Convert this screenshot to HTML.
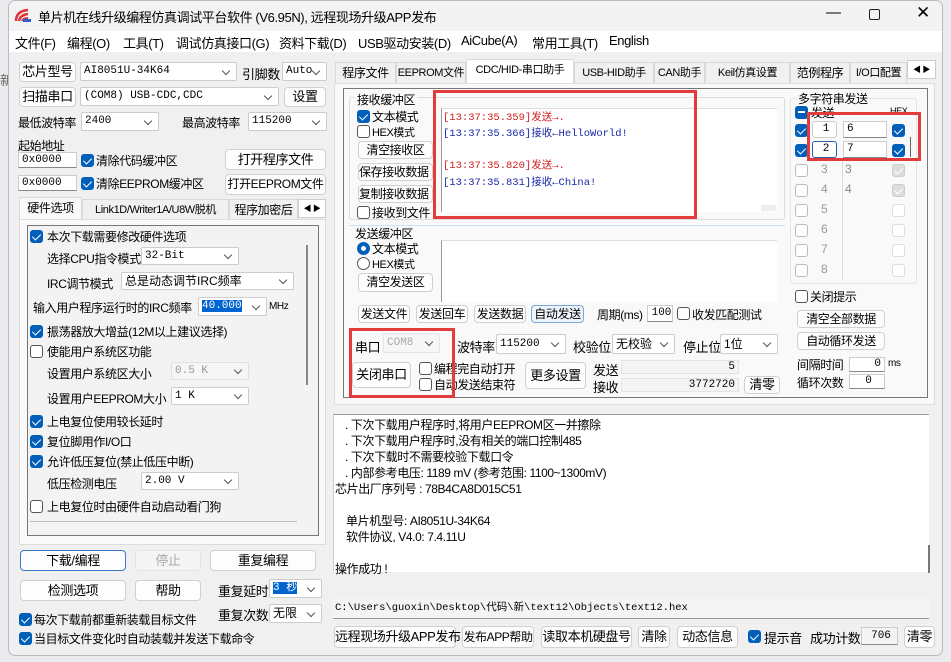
<!DOCTYPE html>
<html><head><meta charset="utf-8"><style>
*{box-sizing:border-box;margin:0;padding:0}
body{width:951px;height:662px;overflow:hidden;background:#e9ebee;font-family:"Liberation Sans","Noto Sans CJK SC",sans-serif;font-size:12px;color:#000;position:relative;letter-spacing:-0.4px}
.a{position:absolute;white-space:nowrap}
.btn{position:absolute;background:#fdfdfd;border:1px solid #d0d0d0;border-radius:4px;text-align:center;white-space:nowrap;font-size:12px}
.cb{position:absolute;width:13px;height:13px;border:1px solid #555;border-radius:3px;background:#fff}
.cb.on{background:#005fb8;border-color:#005fb8}
.cb.on:after{content:"";position:absolute;left:3px;top:1px;width:4px;height:7px;border:solid #fff;border-width:0 1.5px 1.5px 0;transform:rotate(45deg)}
.cb.dis{background:#ddd;border-color:#ccc}
.cb.dis:after{content:"";position:absolute;left:3px;top:1px;width:4px;height:7px;border:solid #fff;border-width:0 1.5px 1.5px 0;transform:rotate(45deg)}
.cb.lt{border-color:#bbb}
.cmb{position:absolute;background:#fff;border:1px solid #ccc;border-radius:2px;white-space:nowrap;padding-left:3px;font-size:11px;font-family:"Liberation Mono","Noto Sans CJK SC",monospace;letter-spacing:0}
.cmb:after{content:"";position:absolute;right:7px;top:50%;margin-top:-4px;width:5px;height:5px;border:solid #555;border-width:0 1px 1px 0;transform:rotate(45deg)}
.inp{position:absolute;background:#fff;border:1px solid #ccc;border-bottom-color:#888;white-space:nowrap;font-size:11px;font-family:"Liberation Mono",monospace;padding-left:3px;letter-spacing:0}
.mono{font-family:"Liberation Mono","Noto Sans CJK SC",monospace;letter-spacing:0}
.tab{position:absolute;height:21px;border:1px solid #d8d8d8;border-bottom:none;background:#f0f0f0;text-align:center;white-space:nowrap;line-height:20px;font-size:12px}
.red{position:absolute;border:3px solid #e23b3b}
.grp{position:absolute;border:1px solid #dcdcdc;border-radius:3px}
</style></head><body>
<div class="a" style="left:0;top:70px;color:#666;font-size:13px">新</div>
<div style="position:absolute;left:8px;top:0;width:935px;height:656px;background:#f0f0f0;border:1px solid #bbb;border-radius:7px;overflow:hidden">
<div style="position:absolute;left:0;top:0;width:100%;height:30px;background:#f3f3f3"></div>
<div style="position:absolute;left:0;top:30px;width:100%;height:21px;background:#fff"></div>
</div>
<svg class="a" style="left:14px;top:7px" width="18" height="16"><path d="M2 14 Q2 4 14 3" stroke="#d9363e" stroke-width="2.5" fill="none"/><path d="M5 14 Q6 8 14 7" stroke="#d9363e" stroke-width="2.5" fill="none"/><path d="M8 14 Q9 11 14 11" stroke="#d9363e" stroke-width="2" fill="none"/><rect x="9" y="12" width="8" height="3" fill="#2b5fcf"/></svg>
<div class="a" style="left:38px;top:7px;font-size:13px">单片机在线升级编程仿真调试平台软件 (V6.95N), 远程现场升级APP发布</div>
<div class="a" style="left:826px;top:4px;font-size:15px">—</div>
<div class="a" style="left:869px;top:9px;width:11px;height:11px;border:1px solid #222;border-radius:2px"></div>
<div class="a" style="left:916px;top:3px;font-size:17px">✕</div>
<div class="a" style="left:15px;top:33px;font-size:13px">文件(F)</div>
<div class="a" style="left:67px;top:33px;font-size:13px">编程(O)</div>
<div class="a" style="left:123px;top:33px;font-size:13px">工具(T)</div>
<div class="a" style="left:176px;top:33px;font-size:13px">调试仿真接口(G)</div>
<div class="a" style="left:279px;top:33px;font-size:13px">资料下载(D)</div>
<div class="a" style="left:358px;top:33px;font-size:13px">USB驱动安装(D)</div>
<div class="a" style="left:461px;top:33px;font-size:13px">AiCube(A)</div>
<div class="a" style="left:532px;top:33px;font-size:13px">常用工具(T)</div>
<div class="a" style="left:609px;top:33px;font-size:13px">English</div>
<div class="btn" style="left:19px;top:62px;width:57px;height:20px;line-height:18px;font-size:13px">芯片型号</div>
<div class="cmb" style="left:80px;top:62px;width:157px;height:19px;line-height:17px">AI8051U-34K64</div>
<div class="a" style="left:242px;top:64px;font-size:13px">引脚数</div>
<div class="cmb" style="left:282px;top:62px;width:45px;height:19px;line-height:17px">Auto</div>
<div class="btn" style="left:19px;top:87px;width:57px;height:20px;line-height:18px;font-size:13px">扫描串口</div>
<div class="cmb" style="left:80px;top:87px;width:199px;height:19px;line-height:17px">(COM8) USB-CDC,CDC</div>
<div class="btn" style="left:284px;top:87px;width:42px;height:20px;line-height:18px;font-size:13px">设置</div>
<div class="a" style="left:18px;top:114px">最低波特率</div>
<div class="cmb" style="left:81px;top:112px;width:78px;height:19px;line-height:17px">2400</div>
<div class="a" style="left:182px;top:114px">最高波特率</div>
<div class="cmb" style="left:248px;top:112px;width:79px;height:19px;line-height:17px">115200</div>
<div class="a" style="left:18px;top:137px">起始地址</div>
<div class="inp" style="left:18px;top:152px;width:59px;height:16px;line-height:14px">0x0000</div>
<div class="cb on" style="left:81px;top:154px"></div><div class="a" style="left:96px;top:152px">清除代码缓冲区</div>
<div class="btn" style="left:225px;top:149px;width:101px;height:21px;line-height:19px;font-size:13px">打开程序文件</div>
<div class="inp" style="left:18px;top:175px;width:59px;height:16px;line-height:14px">0x0000</div>
<div class="cb on" style="left:81px;top:177px"></div><div class="a" style="left:96px;top:175px">清除EEPROM缓冲区</div>
<div class="btn" style="left:225px;top:174px;width:101px;height:21px;line-height:19px;font-size:12px">打开EEPROM文件</div>
<div class="tab" style="left:19px;top:197px;width:63px;height:23px;background:#f9f9f9">硬件选项</div>
<div class="tab" style="left:82px;top:199px;width:147px;font-size:11px">Link1D/Writer1A/U8W脱机</div>
<div class="tab" style="left:229px;top:199px;width:69px;overflow:hidden">程序加密后</div>
<div class="a" style="left:298px;top:199px;width:28px;height:19px;border:1px solid #ccc;background:#fff;font-size:8px;line-height:17px;text-align:center">◀ ▶</div>
<div class="a" style="left:19px;top:219px;width:307px;height:326px;border:1px solid #dcdcdc;background:#f9f9f9"></div>
<div class="a" style="left:27px;top:225px;width:292px;height:311px;border:1px solid #777;background:#f3f3f3"></div>
<div class="a" style="left:306px;top:245px;width:2px;height:140px;background:#888"></div>
<div class="a" style="left:30px;top:521px;width:267px;height:1px;background:#bbb"></div>
<div class="cb on" style="left:30px;top:230px"></div><div class="a" style="left:47px;top:228px">本次下载需要修改硬件选项</div>
<div class="a" style="left:47px;top:250px">选择CPU指令模式</div><div class="cmb" style="left:141px;top:247px;width:98px;height:18px;line-height:16px">32-Bit</div>
<div class="a" style="left:47px;top:275px">IRC调节模式</div><div class="cmb" style="left:121px;top:272px;width:173px;height:18px;line-height:16px;font-family:'Liberation Sans','Noto Sans CJK SC',sans-serif;font-size:12px">总是动态调节IRC频率</div>
<div class="a" style="left:33px;top:299px">输入用户程序运行时的IRC频率</div><div class="cmb" style="left:198px;top:297px;width:69px;height:19px;line-height:17px"><span style="background:#0064d0;color:#fff">40.000</span></div><div class="a" style="left:269px;top:301px;font-size:10px">MHz</div>
<div class="cb on" style="left:30px;top:325px"></div><div class="a" style="left:47px;top:323px">振荡器放大增益(12M以上建议选择)</div>
<div class="cb" style="left:30px;top:345px"></div><div class="a" style="left:47px;top:343px">使能用户系统区功能</div>
<div class="a" style="left:47px;top:365px">设置用户系统区大小</div><div class="cmb" style="left:171px;top:362px;width:78px;height:18px;line-height:16px;color:#999;border-color:#e0e0e0;background:#f6f6f6">0.5 K</div>
<div class="a" style="left:47px;top:390px">设置用户EEPROM大小</div><div class="cmb" style="left:171px;top:387px;width:78px;height:18px;line-height:16px">1   K</div>
<div class="cb on" style="left:30px;top:415px"></div><div class="a" style="left:47px;top:413px">上电复位使用较长延时</div>
<div class="cb on" style="left:30px;top:435px"></div><div class="a" style="left:47px;top:433px">复位脚用作I/O口</div>
<div class="cb on" style="left:30px;top:455px"></div><div class="a" style="left:47px;top:453px">允许低压复位(禁止低压中断)</div>
<div class="a" style="left:47px;top:475px">低压检测电压</div><div class="cmb" style="left:141px;top:472px;width:98px;height:18px;line-height:16px">2.00 V</div>
<div class="cb" style="left:30px;top:500px"></div><div class="a" style="left:47px;top:498px">上电复位时由硬件自动启动看门狗</div>
<div class="btn" style="left:20px;top:550px;width:106px;height:21px;line-height:19px;border-color:#3a78c8;font-size:13px">下载/编程</div>
<div class="btn" style="left:135px;top:550px;width:66px;height:21px;line-height:19px;color:#aaa;border-color:#e4e4e4;background:#f5f5f5;font-size:13px">停止</div>
<div class="btn" style="left:210px;top:550px;width:106px;height:21px;line-height:19px;font-size:13px">重复编程</div>
<div class="btn" style="left:20px;top:580px;width:106px;height:21px;line-height:19px;font-size:13px">检测选项</div>
<div class="btn" style="left:135px;top:580px;width:66px;height:21px;line-height:19px;font-size:13px">帮助</div>
<div class="a" style="left:218px;top:581px;font-size:13px">重复延时</div><div class="cmb" style="left:269px;top:579px;width:53px;height:19px;line-height:17px"><span style="background:#0064d0;color:#fff">3 秒</span></div>
<div class="a" style="left:218px;top:605px;font-size:13px">重复次数</div><div class="cmb" style="left:269px;top:604px;width:53px;height:19px;line-height:17px;font-family:'Liberation Sans','Noto Sans CJK SC',sans-serif;font-size:12px">无限</div>
<div class="cb on" style="left:19px;top:613px"></div><div class="a" style="left:34px;top:611px">每次下载前都重新装载目标文件</div>
<div class="cb on" style="left:19px;top:632px"></div><div class="a" style="left:34px;top:630px">当目标文件变化时自动装载并发送下载命令</div>
<div class="tab" style="left:335px;top:62px;width:61px">程序文件</div>
<div class="tab" style="left:396px;top:62px;width:70px;font-size:11px">EEPROM文件</div>
<div class="tab" style="left:466px;top:59px;width:108px;height:25px;background:#fff;font-size:11px">CDC/HID-串口助手</div>
<div class="tab" style="left:574px;top:62px;width:80px;font-size:11px">USB-HID助手</div>
<div class="tab" style="left:654px;top:62px;width:51px;font-size:11px">CAN助手</div>
<div class="tab" style="left:705px;top:62px;width:85px;font-size:11px">Keil仿真设置</div>
<div class="tab" style="left:790px;top:62px;width:60px">范例程序</div>
<div class="tab" style="left:850px;top:62px;width:57px;overflow:hidden;font-size:11px">I/O口配置</div>
<div class="a" style="left:907px;top:60px;width:29px;height:19px;border:1px solid #ccc;background:#fff;font-size:8px;line-height:17px;text-align:center">◀ ▶</div>
<div class="a" style="left:334px;top:83px;width:601px;height:322px;background:#f9f9f9;border:1px solid #ddd"></div>
<div class="a" style="left:343px;top:88px;width:585px;height:310px;border:1px solid #777"></div>
<div class="grp" style="left:349px;top:97px;width:436px;height:123px"></div>
<div class="a" style="left:355px;top:91px;background:#f9f9f9;padding:0 2px">接收缓冲区</div>
<div class="cb on" style="left:357px;top:110px"></div><div class="a" style="left:372px;top:108px">文本模式</div>
<div class="cb" style="left:357px;top:125px"></div><div class="a" style="left:372px;top:124px;font-size:11px">HEX模式</div>
<div class="btn" style="left:358px;top:141px;width:75px;height:18px;line-height:16px">清空接收区</div>
<div class="btn" style="left:358px;top:163px;width:75px;height:18px;line-height:16px;text-align:left;overflow:hidden">保存接收数据</div>
<div class="btn" style="left:358px;top:185px;width:75px;height:18px;line-height:16px;text-align:left;overflow:hidden">复制接收数据</div>
<div class="cb" style="left:357px;top:206px"></div><div class="a" style="left:372px;top:204px">接收到文件</div>
<div class="a" style="left:441px;top:108px;width:336px;height:104px;background:#fff;border-left:1px solid #999;border-top:1px solid #ddd"></div>
<div class="a" style="left:761px;top:205px;width:15px;height:6px;background:#eee"></div>
<div class="a mono" style="left:443px;top:109px;font-size:10.5px;color:#d02020">[13:37:35.359]发送→.</div>
<div class="a mono" style="left:443px;top:125px;font-size:10.5px;color:#1a2aa8">[13:37:35.366]接收←HelloWorld!</div>
<div class="a mono" style="left:443px;top:157px;font-size:10.5px;color:#d02020">[13:37:35.820]发送→.</div>
<div class="a mono" style="left:443px;top:174px;font-size:10.5px;color:#1a2aa8">[13:37:35.831]接收←China!</div>
<div class="red" style="left:433px;top:90px;width:264px;height:129px"></div>
<div class="a" style="left:349px;top:225px;width:436px;height:1px;background:#cfe0ee"></div>
<div class="a" style="left:355px;top:225px">发送缓冲区</div>
<div class="a" style="left:357px;top:242px;width:13px;height:13px;border-radius:50%;border:4px solid #005fb8;background:#fff"></div><div class="a" style="left:372px;top:240px">文本模式</div>
<div class="a" style="left:357px;top:257px;width:13px;height:13px;border-radius:50%;border:1px solid #555;background:#fff"></div><div class="a" style="left:372px;top:256px;font-size:11px">HEX模式</div>
<div class="btn" style="left:358px;top:273px;width:75px;height:19px;line-height:17px">清空发送区</div>
<div class="a" style="left:441px;top:240px;width:336px;height:62px;background:#fff;border-left:1px solid #999;border-top:1px solid #ddd"></div>
<div class="btn" style="left:358px;top:305px;width:52px;height:18px;line-height:16px">发送文件</div>
<div class="btn" style="left:416px;top:305px;width:52px;height:18px;line-height:16px">发送回车</div>
<div class="btn" style="left:474px;top:305px;width:52px;height:18px;line-height:16px">发送数据</div>
<div class="btn" style="left:531px;top:305px;width:53px;height:18px;line-height:16px;border-color:#7aa6d8;background:#eef4fb">自动发送</div>
<div class="a" style="left:597px;top:306px">周期(ms)</div>
<div class="inp" style="left:647px;top:305px;width:26px;height:17px;line-height:15px;text-align:center">100</div>
<div class="cb" style="left:677px;top:307px"></div><div class="a" style="left:692px;top:306px">收发匹配测试</div>
<div class="a" style="left:355px;top:337px;font-size:13px">串口</div>
<div class="cmb" style="left:383px;top:333px;width:57px;height:20px;line-height:18px;color:#aaa;border-color:#e4e4e4;background:#f6f6f6">COM8</div>
<div class="a" style="left:457px;top:337px;font-size:13px">波特率</div>
<div class="cmb" style="left:496px;top:334px;width:70px;height:20px;line-height:18px">115200</div>
<div class="a" style="left:573px;top:337px;font-size:13px">校验位</div>
<div class="cmb" style="left:612px;top:334px;width:63px;height:20px;line-height:18px;font-family:'Liberation Sans','Noto Sans CJK SC',sans-serif;font-size:12px">无校验</div>
<div class="a" style="left:683px;top:337px;font-size:13px">停止位</div>
<div class="cmb" style="left:720px;top:334px;width:58px;height:20px;line-height:18px;font-family:'Liberation Sans','Noto Sans CJK SC',sans-serif;font-size:12px">1位</div>
<div class="btn" style="left:352px;top:362px;width:59px;height:26px;line-height:24px;font-size:13px">关闭串口</div>
<div class="cb" style="left:419px;top:362px"></div><div class="a" style="left:434px;top:360px">编程完自动打开</div>
<div class="cb" style="left:419px;top:378px"></div><div class="a" style="left:434px;top:376px">自动发送结束符</div>
<div class="btn" style="left:525px;top:362px;width:61px;height:27px;line-height:25px;font-size:13px">更多设置</div>
<div class="a" style="left:593px;top:360px;font-size:13px">发送</div>
<div class="inp" style="left:621px;top:360px;width:118px;height:14px;line-height:12px;text-align:right;padding-right:3px;background:#f4f4f4;border-color:#e4e4e4">5</div>
<div class="a" style="left:593px;top:377px;font-size:13px">接收</div>
<div class="inp" style="left:621px;top:378px;width:118px;height:14px;line-height:12px;text-align:right;padding-right:3px;background:#f4f4f4;border-color:#e4e4e4">3772720</div>
<div class="btn" style="left:744px;top:376px;width:36px;height:18px;line-height:16px;font-size:13px">清零</div>
<div class="red" style="left:349px;top:328px;width:106px;height:70px"></div>
<div class="grp" style="left:790px;top:98px;width:127px;height:186px;border-color:#e4e4e4"></div>
<div class="a" style="left:797px;top:90px;background:#f9f9f9;padding:0 1px">多字符串发送</div>
<div class="a" style="left:795px;top:106px;width:13px;height:13px;border-radius:3px;background:#005fb8"><div style="margin:5px 3px;width:7px;height:2px;background:#fff"></div></div>
<div class="a" style="left:811px;top:104px">发送</div><div class="a" style="left:890px;top:106px;font-size:9px">HEX</div>
<div class="cb on" style="left:795px;top:124px"></div><div class="inp" style="left:812px;top:121px;width:25px;height:17px;line-height:15px;text-align:center;border-radius:3px;border-color:#ccc">1</div><div class="inp" style="left:843px;top:121px;width:44px;height:17px;line-height:15px">6</div><div class="cb on" style="left:892px;top:124px"></div>
<div class="cb on" style="left:795px;top:144px"></div><div class="inp" style="left:812px;top:141px;width:25px;height:17px;line-height:15px;text-align:center;border-radius:3px;border-color:#2a5ea8">2</div><div class="inp" style="left:843px;top:141px;width:44px;height:17px;line-height:15px">7</div><div class="cb on" style="left:892px;top:144px"></div>
<div class="a" style="left:910px;top:137px;width:1px;height:20px;background:#666"></div>
<div class="cb lt" style="left:795px;top:164px"></div><div class="a" style="left:821px;top:162px;color:#999">3</div><div class="a" style="left:845px;top:162px;color:#888">3</div><div class="cb dis" style="left:892px;top:164px"></div>
<div class="cb lt" style="left:795px;top:184px"></div><div class="a" style="left:821px;top:182px;color:#999">4</div><div class="a" style="left:845px;top:182px;color:#888">4</div><div class="cb dis" style="left:892px;top:184px"></div>
<div class="cb lt" style="left:795px;top:204px"></div><div class="a" style="left:821px;top:202px;color:#999">5</div><div class="cb lt" style="left:892px;top:204px;border-color:#ddd"></div>
<div class="cb lt" style="left:795px;top:224px"></div><div class="a" style="left:821px;top:222px;color:#999">6</div><div class="cb lt" style="left:892px;top:224px;border-color:#ddd"></div>
<div class="cb lt" style="left:795px;top:244px"></div><div class="a" style="left:821px;top:242px;color:#999">7</div><div class="cb lt" style="left:892px;top:244px;border-color:#ddd"></div>
<div class="cb lt" style="left:795px;top:264px"></div><div class="a" style="left:821px;top:262px;color:#999">8</div><div class="cb lt" style="left:892px;top:264px;border-color:#ddd"></div>
<div class="a" style="left:842px;top:160px;width:1px;height:120px;background:#ddd"></div>
<div class="red" style="left:807px;top:112px;width:114px;height:49px"></div>
<div class="cb" style="left:795px;top:290px"></div><div class="a" style="left:810px;top:288px">关闭提示</div>
<div class="btn" style="left:797px;top:310px;width:88px;height:18px;line-height:16px">清空全部数据</div>
<div class="btn" style="left:797px;top:332px;width:88px;height:18px;line-height:16px">自动循环发送</div>
<div class="a" style="left:797px;top:356px">间隔时间</div><div class="inp" style="left:849px;top:357px;width:36px;height:15px;line-height:13px;text-align:right;padding-right:3px">0</div><div class="a" style="left:888px;top:358px;font-size:10px">ms</div>
<div class="a" style="left:797px;top:374px">循环次数</div><div class="inp" style="left:849px;top:374px;width:36px;height:15px;line-height:13px;text-align:center">0</div>
<div class="a" style="left:333px;top:414px;width:596px;height:158px;background:#fff;border-top:1px solid #999;border-left:1px solid #ccc"></div>
<div class="a" style="left:928px;top:545px;width:2px;height:28px;background:#777"></div>
<div class="a" style="left:345px;top:416px">.  下次下载用户程序时,将用户EEPROM区一并擦除</div>
<div class="a" style="left:345px;top:432px">.  下次下载用户程序时,没有相关的端口控制485</div>
<div class="a" style="left:345px;top:448px">.  下次下载时不需要校验下载口令</div>
<div class="a" style="left:345px;top:464px">.  内部参考电压: 1189 mV (参考范围: 1100~1300mV)</div>
<div class="a" style="left:335px;top:480px">芯片出厂序列号 : 78B4CA8D015C51</div>
<div class="a" style="left:346px;top:512px">单片机型号: AI8051U-34K64</div>
<div class="a" style="left:346px;top:528px">软件协议, V4.0: 7.4.11U</div>
<div class="a" style="left:335px;top:560px">操作成功 !</div>
<div class="a mono" style="left:333px;top:599px;width:596px;height:20px;background:#f4f4f4;border-bottom:1px solid #999;font-size:10.5px;line-height:19px;padding-left:2px">C:\Users\guoxin\Desktop\代码\新\text12\Objects\text12.hex</div>
<div class="btn" style="left:334px;top:626px;width:122px;height:22px;line-height:20px;font-size:13px">远程现场升级APP发布</div>
<div class="btn" style="left:462px;top:626px;width:72px;height:22px;line-height:20px;font-size:12px">发布APP帮助</div>
<div class="btn" style="left:541px;top:626px;width:91px;height:22px;line-height:20px;font-size:13px">读取本机硬盘号</div>
<div class="btn" style="left:638px;top:626px;width:32px;height:22px;line-height:20px;font-size:13px">清除</div>
<div class="btn" style="left:677px;top:626px;width:61px;height:22px;line-height:20px;font-size:13px">动态信息</div>
<div class="cb on" style="left:748px;top:630px"></div><div class="a" style="left:764px;top:628px;font-size:13px">提示音</div>
<div class="a" style="left:810px;top:628px;font-size:13px">成功计数</div>
<div class="inp" style="left:861px;top:627px;width:37px;height:18px;line-height:16px;text-align:center;background:#f4f4f4">706</div>
<div class="btn" style="left:904px;top:626px;width:31px;height:22px;line-height:20px;font-size:13px">清零</div>
</body></html>
